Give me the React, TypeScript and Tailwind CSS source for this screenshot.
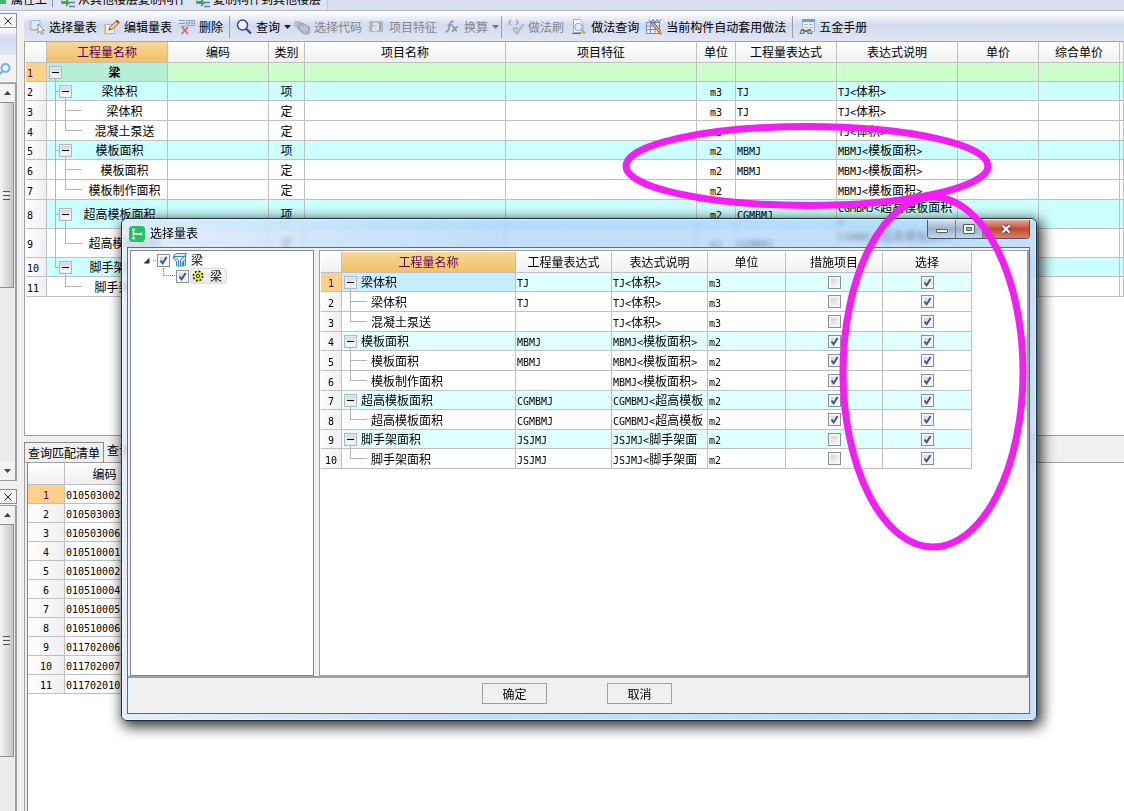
import { useState } from "react";
import type { ReactNode } from "react";
import clsx from "clsx";

type TreeShape = {
  depth: number;
  expandable?: boolean;
  last?: boolean;
  parentLast?: boolean;
};

type MainRow = TreeShape & {
  name: string;
  kind: string;
  unit: string;
  expression: string;
  note: string;
  height: number;
};

type DialogRow = TreeShape & {
  name: string;
  expression: string;
  note: string;
  unit: string;
  measure: boolean;
  height: number;
};

const mainColumns = [
  { label: "编码", width: "w-[101px]" },
  { label: "类别", width: "w-[36px]" },
  { label: "项目名称", width: "w-[201px]" },
  { label: "项目特征", width: "w-[191px]" },
  { label: "单位", width: "w-[39px]" },
  { label: "工程量表达式", width: "w-[101px]" },
  { label: "表达式说明", width: "w-[121px]" },
  { label: "单价", width: "w-[81px]" },
  { label: "综合单价", width: "w-[81px]" },
];

const mainRows: MainRow[] = [
  { name: "梁", depth: 0, expandable: true, kind: "", unit: "", expression: "", note: "", height: 19 },
  { name: "梁体积", depth: 1, expandable: true, kind: "项", unit: "m3", expression: "TJ", note: "TJ<体积>", height: 19 },
  { name: "梁体积", depth: 2, kind: "定", unit: "m3", expression: "TJ", note: "TJ<体积>", height: 20 },
  { name: "混凝土泵送", depth: 2, last: true, kind: "定", unit: "m3", expression: "", note: "TJ<体积>", height: 20 },
  { name: "模板面积", depth: 1, expandable: true, kind: "项", unit: "m2", expression: "MBMJ", note: "MBMJ<模板面积>", height: 19 },
  { name: "模板面积", depth: 2, kind: "定", unit: "m2", expression: "MBMJ", note: "MBMJ<模板面积>", height: 20 },
  { name: "模板制作面积", depth: 2, last: true, kind: "定", unit: "m2", expression: "", note: "MBMJ<模板面积>", height: 20 },
  { name: "超高模板面积", depth: 1, expandable: true, kind: "项", unit: "m2", expression: "CGMBMJ", note: "CGMBMJ<超高模板面积>", height: 29 },
  { name: "超高模板面积", depth: 2, last: true, kind: "定", unit: "m2", expression: "CGMBMJ", note: "CGMBMJ<超高模板面积>", height: 29 },
  { name: "脚手架面积", depth: 1, expandable: true, last: true, kind: "项", unit: "m2", expression: "JSJMJ", note: "JSJMJ<脚手架面积>", height: 19 },
  { name: "脚手架面积", depth: 2, last: true, parentLast: true, kind: "定", unit: "m2", expression: "JSJMJ", note: "JSJMJ<脚手架面积>", height: 20 },
];

const dialogColumns = [
  { label: "工程量表达式", width: "w-[96px]" },
  { label: "表达式说明", width: "w-[96px]" },
  { label: "单位", width: "w-[78px]" },
  { label: "措施项目", width: "w-[97px]" },
  { label: "选择", width: "w-[89px]" },
];

const dialogRows: DialogRow[] = [
  { name: "梁体积", depth: 0, expandable: true, expression: "TJ", note: "TJ<体积>", unit: "m3", measure: false, height: 19 },
  { name: "梁体积", depth: 1, expression: "TJ", note: "TJ<体积>", unit: "m3", measure: false, height: 20 },
  { name: "混凝土泵送", depth: 1, last: true, expression: "", note: "TJ<体积>", unit: "m3", measure: false, height: 20 },
  { name: "模板面积", depth: 0, expandable: true, expression: "MBMJ", note: "MBMJ<模板面积>", unit: "m2", measure: true, height: 19 },
  { name: "模板面积", depth: 1, expression: "MBMJ", note: "MBMJ<模板面积>", unit: "m2", measure: true, height: 20 },
  { name: "模板制作面积", depth: 1, last: true, expression: "", note: "MBMJ<模板面积>", unit: "m2", measure: true, height: 20 },
  { name: "超高模板面积", depth: 0, expandable: true, expression: "CGMBMJ", note: "CGMBMJ<超高模板面积>", unit: "m2", measure: true, height: 19 },
  { name: "超高模板面积", depth: 1, last: true, expression: "CGMBMJ", note: "CGMBMJ<超高模板面积>", unit: "m2", measure: true, height: 20 },
  { name: "脚手架面积", depth: 0, expandable: true, expression: "JSJMJ", note: "JSJMJ<脚手架面积>", unit: "m2", measure: false, height: 19 },
  { name: "脚手架面积", depth: 1, last: true, expression: "JSJMJ", note: "JSJMJ<脚手架面积>", unit: "m2", measure: false, height: 20 },
];

const listCodes = [
  "010503002",
  "010503003",
  "010503006",
  "010510001",
  "010510002",
  "010510004",
  "010510005",
  "010510006",
  "011702006",
  "011702007",
  "011702010",
];

const headCell =
  "border-r border-b border-[#c0c0c0] bg-linear-to-b from-white to-[#f0f0f0] p-0 font-normal";
const activeHeadCell =
  "border-r border-b border-[#c0c0c0] bg-linear-to-b from-[#f9d798] to-[#f2c063] p-0 font-normal text-[#5b0059]";
const numberCell =
  "border-r border-b border-[#c0c0c0] bg-linear-to-r from-white to-[#efefef] p-0 font-normal";
const activeNumberCell =
  "border-r border-b border-[#c0c0c0] bg-[#ffd08a] p-0 font-normal text-[#5b0059]";
const bodyCell = "border-r border-b border-[#c0c0c0] p-0";

// Latin letters and digits take half the width of a Chinese character
function Mixed({ text }: { text: string }) {
  return (
    <>
      {text.split(/([\x20-\x7e]+)/).map((part, index) =>
        index % 2 === 1 ? (
          <span
            key={index}
            className="font-['DejaVu_Sans_Mono',monospace] text-[10px] leading-none"
          >
            {part}
          </span>
        ) : (
          part
        ),
      )}
    </>
  );
}

function TreeGutter({
  row,
  base,
}: {
  row: TreeShape & { height: number };
  base: number;
}) {
  const middle = Math.floor((row.height - 1) / 2);
  const line = "absolute bg-[#b4b4b4]";
  const stem = 8 + (row.depth - 1) * 10;

  return (
    <span
      className="relative shrink-0 self-stretch"
      style={{ width: base + row.depth * 10 }}
    >
      {row.depth === 2 && !row.parentLast ? (
        <span className="absolute top-0 -bottom-px left-2 w-px bg-[#b4b4b4]" />
      ) : null}
      {row.depth > 0 ? (
        <>
          <span
            className={clsx(line, "top-0 w-px")}
            style={{ left: stem, height: row.last ? middle : row.height }}
          />
          <span
            className={clsx(line, "h-px", row.expandable ? "w-1" : "w-[17px]")}
            style={{ left: stem, top: middle }}
          />
        </>
      ) : null}
      {row.expandable ? (
        <>
          <span
            className={clsx(line, "-bottom-px w-px")}
            style={{ left: stem + 10, top: middle + 6 }}
          />
          <button
            type="button"
            aria-label="折叠"
            className="absolute flex size-[13px] items-center justify-center border border-[#b8b8b8] bg-linear-to-b from-[#cdd5e0] to-white shadow-[inset_0_0_0_1px_#e9e9e9]"
            style={{ left: 2 + row.depth * 10, top: middle - 6 }}
          >
            <span className="h-px w-[7px] bg-black" />
          </button>
        </>
      ) : null}
    </span>
  );
}

function TickBox({
  label,
  initial,
}: {
  label: string;
  initial: boolean;
}) {
  const [checked, setChecked] = useState(initial);

  return (
    <label className="relative block size-[13px] shrink-0">
      <input
        type="checkbox"
        aria-label={label}
        checked={checked}
        onChange={(event) => setChecked(event.target.checked)}
        className="block size-[13px] appearance-none border border-[#8e8f8f] bg-linear-to-br from-[#c8ccd4] to-white shadow-[inset_0_0_0_2px_#f4f4f4]"
      />
      {checked ? (
        <svg
          viewBox="0 0 13 13"
          className="pointer-events-none absolute inset-0 size-[13px]"
        >
          <path d="M3.5 6.500 5.600 9.400 9.600 3" fill="none" stroke="#3c5290" strokeWidth="1.900" />
        </svg>
      ) : null}
    </label>
  );
}

function Icon({ children }: { children: ReactNode }) {
  return (
    <svg viewBox="0 0 16 16" className="size-4 shrink-0" fill="none">
      {children}
    </svg>
  );
}

const icons = {
  pick: (
    <Icon>
      <path d="M2 1.5h9v9H2z" fill="#dcebfa" stroke="#9fb6da" />
      <path d="M.5 1v10M1 11.5h7" stroke="#f2b98c" />
      <path d="M9 5v9l2-2 1.6 3.4 1.6-.8L12.700 11.500H15.500z" fill="#fff" stroke="#7f8da8" />
    </Icon>
  ),
  edit: (
    <Icon>
      <path d="M1.500 5.500h9v9h-9z" fill="#e3effb" stroke="#9fb6da" />
      <path d="M.5 5v10h8" stroke="#f2b98c" />
      <path d="m5 11 1-3 7-7 2.500 2.500-7 6.500z" fill="#f5cf7c" stroke="#9a6f3c" />
      <path d="m11.500 2.500 1.500-1.700 2.500 2.400L14 4.800z" fill="#b0524a" />
      <path d="m5 11 .6-1.800L7 10.500z" fill="#333" />
    </Icon>
  ),
  remove: (
    <Icon>
      <path d="M0 1.500h6M0 4.500h6M2 7.500h4" stroke="#8a93a5" />
      <path d="M7.500 1.500h8v5h-8zM7.500 4h8M10 1.500v5M13 1.500v5" fill="#eef3fa" stroke="#8fa0bd" />
      <path d="m3 8 6 7M9 8l-6.500 7" stroke="#ea5f5c" strokeWidth="1.700" />
    </Icon>
  ),
  search: (
    <Icon>
      <circle cx="6.500" cy="6" r="5" fill="#f3f7ff" stroke="#3d3f9c" strokeWidth="1.500" />
      <path d="m10 9.500 5 5" stroke="#3d3f9c" strokeWidth="2.200" />
    </Icon>
  ),
  code: (
    <Icon>
      <path d="M0 2h6l3 3v5H4L0 7z" fill="#b9bec8" />
      <path d="m5 6 3-2 7.500 4v6l-4 1.500L7 13l-3-4z" fill="#b0b5bf" stroke="#9aa0ac" />
      <path d="m7 8 4 4M9.500 7l4 4" stroke="#dfe2e8" />
    </Icon>
  ),
  feature: (
    <Icon>
      <path d="M0 2h14v11H0z" fill="#b4b8c2" />
      <path d="M4 5.500c3-1.500 5-.5 5 1.500v4M9 8c-3-.5-5 .2-5 1.700 0 1.800 3.500 1.800 5-.3" stroke="#eceef3" strokeWidth="1.800" />
      <path d="M11 4v7" stroke="#8c92a0" />
    </Icon>
  ),
  fx: (
    <Icon>
      <path d="M9.500 2.500C7 1.500 6.300 4 5.500 7c-1 4-1.500 6.500-4 5.500M3.500 6H8.500M8 7.500c2.500-.5 2 4.500 5 4.500M13.500 7.500 8 12.500" stroke="#8f95a3" strokeWidth="1.700" />
    </Icon>
  ),
  brush: (
    <Icon>
      <path d="M3 1 .8 3.500 3 6M8 1l2.200 2.500L8 6" stroke="#9aa0ad" strokeWidth="1.200" />
      <path d="m15.500 5-5 5-2-1.500-3.500 1c.5 3 2.500 5.500 5 5.500l2-4 3.500-5z" fill="#c3c7d0" stroke="#a5aab6" />
    </Icon>
  ),
  docSearch: (
    <Icon>
      <path d="M2.500.5h6l3.500 3.500v9.500H2.500z" fill="#fff" stroke="#a0a9b8" />
      <circle cx="7.500" cy="8" r="3.800" fill="#d7ecf7" stroke="#8aa5bd" />
      <path d="m10.500 11 3.500 3.500" stroke="#e0a54a" strokeWidth="2.400" />
      <path d="M1 14.500h9" stroke="#666" />
    </Icon>
  ),
  auto: (
    <Icon>
      <path d="M.5 3.500h13v11H.5zM.5 7h13M.5 10.500h13M4.500 3.500v11M9 3.500v11" fill="#eef2fd" stroke="#7b87c4" />
      <path d="m3 .5 2 3 2-3 2 3 2-3 2 3 2-3" stroke="#5b74c4" />
      <path d="m5.500 4.500 2-1 7 8.500-1.700 1.300z" fill="#f4d079" stroke="#6b5a3a" />
      <path d="m12.500 12.500 3 3" stroke="#d77a3d" strokeWidth="2" />
    </Icon>
  ),
  manual: (
    <Icon>
      <path d="M3.500.5h12v12h-12z" fill="#eaf1fb" stroke="#9db5db" />
      <path d="M3 0h13v3H3z" fill="#6f9ae6" />
      <path d="M5 5.500h4M10 5.500h4M5 8.500h4M10 8.500h4" stroke="#a3b8d9" />
      <path d="M2 10h3l1 1h2l1-1h3l1.500 5H9l-1-2H6l-1 2H.5z" fill="#6f747c" />
      <circle cx="3.300" cy="13" r="1.300" fill="#c8ccd2" />
      <circle cx="10.700" cy="13" r="1.300" fill="#c8ccd2" />
    </Icon>
  ),
  copyLayer: (
    <Icon>
      <path d="M2 1v5h4V3l4 5-4 4V9H1z" fill="#4ca64c" />
      <path d="M9 3.500h6M9 7.500h6M9 11.500h6" stroke="#5a7cc0" strokeWidth="1.500" />
    </Icon>
  ),
};

function ToolButton({
  icon,
  label,
  disabled,
  dropdown,
}: {
  icon: ReactNode;
  label: string;
  disabled?: boolean;
  dropdown?: boolean;
}) {
  return (
    <button
      type="button"
      disabled={disabled}
      className={clsx(
        "flex shrink-0 items-center gap-1 whitespace-nowrap",
        disabled ? "text-[#85858c]" : "text-black",
        dropdown && "-mr-1",
      )}
    >
      {icon}
      {label}
      {dropdown ? (
        <svg viewBox="0 0 7 4" className="h-1 w-[7px]">
          <path d="M0 0h7L3.500 4z" fill={disabled ? "#777" : "#222"} />
        </svg>
      ) : null}
    </button>
  );
}

function ToolSeparator() {
  return <span className="-mx-px h-[22px] w-px shrink-0 bg-[#9ba0ad]" />;
}

function Toolbar() {
  return (
    <div className="flex h-[30px] shrink-0 items-center gap-[7px] overflow-hidden border-b border-[#a5a5a5] bg-linear-to-b from-white from-0% via-[#d3daee] via-45% to-[#e1e6f5] pl-[5px]">
      <ToolButton icon={icons.pick} label="选择量表" />
      <ToolButton icon={icons.edit} label="编辑量表" />
      <ToolButton icon={icons.remove} label="删除" />
      <ToolSeparator />
      <ToolButton icon={icons.search} label="查询" dropdown />
      <ToolButton icon={icons.code} label="选择代码" disabled />
      <ToolButton icon={icons.feature} label="项目特征" disabled />
      <ToolButton icon={icons.fx} label="换算" disabled dropdown />
      <ToolSeparator />
      <ToolButton icon={icons.brush} label="做法刷" disabled />
      <ToolButton icon={icons.docSearch} label="做法查询" />
      <ToolButton icon={icons.auto} label="当前构件自动套用做法" />
      <ToolSeparator />
      <ToolButton icon={icons.manual} label="五金手册" />
    </div>
  );
}

function TopStrip() {
  return (
    <div className="flex h-[11px] shrink-0 items-end overflow-hidden border-b border-[#b4bad0] bg-[#d9deee]">
      <div className="flex h-[10px] w-[328px] shrink-0 items-end border-r border-[#c3c8da] bg-[#dfe4f2] whitespace-nowrap">
        <span className="mr-[5px] mb-[6px] h-3 w-[6px] bg-[#49b36b]" />
        <span className="mb-1 w-9 leading-[14px]">属性上</span>
        <span className="mx-[5px] h-[7px] w-px self-start bg-[#8f94a3]" />
        <span className="ml-[2px] -mb-px">{icons.copyLayer}</span>
        <span className="mb-1 ml-[2px] leading-[14px]">从其他楼层复制构件</span>
        <span className="ml-[9px] -mb-px">{icons.copyLayer}</span>
        <span className="mb-1 ml-[2px] leading-[14px]">复制构件到其他楼层</span>
      </div>
    </div>
  );
}

function Arrow({ down }: { down?: boolean }) {
  return (
    <svg viewBox="0 0 7 4" className={clsx("h-1 w-[7px]", down && "rotate-180")}>
      <path d="M0 4h7L3.500 0z" fill="#444" />
    </svg>
  );
}

function ScrollBar({ thumb, downArrow }: { thumb: string; downArrow?: boolean }) {
  return (
    <div className="flex flex-1 flex-col border-t border-r-2 border-[#9f9f9f] bg-[#ececec] pr-px">
      <div className="flex h-[18px] shrink-0 items-center justify-center bg-[#f3f3f3]">
        <Arrow />
      </div>
      <div
        className={clsx(
          "flex flex-col items-center justify-center gap-px border border-l-0 border-[#8f8f8f] bg-linear-to-r from-[#f4f4f4] to-[#c6c6c8]",
          thumb,
        )}
      >
        <span className="h-px w-[7px] bg-[#555]" />
        <span className="h-px w-[7px] bg-white" />
        <span className="h-px w-[7px] bg-[#555]" />
        <span className="h-px w-[7px] bg-white" />
        <span className="h-px w-[7px] bg-[#555]" />
      </div>
      {downArrow ? (
        <div className="mt-auto flex h-[18px] items-center justify-center bg-[#f3f3f3]">
          <Arrow down />
        </div>
      ) : null}
    </div>
  );
}

function PanelClose() {
  return (
    <button
      type="button"
      aria-label="关闭面板"
      className="flex h-[15px] shrink-0 items-center justify-center border border-l-0 border-[#8f8f8f] bg-[#f5f5f5]"
    >
      <svg viewBox="0 0 8 8" className="size-2">
        <path d="m.5.5 7 7m0-7-7 7" stroke="#222" />
      </svg>
    </button>
  );
}

function LeftEdge() {
  return (
    <aside className="flex w-6 shrink-0 flex-col bg-[#f0f0f0] pr-[7px]">
      <div className="flex h-[469px] flex-col border-b border-[#9f9f9f] pt-px">
        <PanelClose />
        <div className="h-[27px] shrink-0 border-r border-[#b5b5b5] bg-linear-to-b from-white via-[#d3daee] via-40% to-[#e1e6f5]" />
        <div className="flex h-7 shrink-0 items-center border-r border-b border-[#b5b5b5] bg-[#f3f3f3]">
          <svg viewBox="0 0 12 12" className="size-3" fill="none">
            <circle cx="5.500" cy="5" r="4" stroke="#6ab2ea" strokeWidth="2" />
            <path d="M2.500 8 0 11" stroke="#6ab2ea" strokeWidth="2" />
          </svg>
        </div>
        <ScrollBar thumb="h-[186px]" downArrow />
      </div>
      <div className="flex flex-1 flex-col pt-2">
        <PanelClose />
        <div className="h-px shrink-0" />
        <ScrollBar thumb="h-[233px]" />
      </div>
    </aside>
  );
}

function QuantityTable() {
  return (
    <table className="w-full table-fixed border-separate border-spacing-0">
      <thead>
        <tr className="h-[21px]">
          <th className={clsx(headCell, "w-[21px]")} />
          <th className={clsx(activeHeadCell, "w-[121px]")}>工程量名称</th>
          {mainColumns.map((column) => (
            <th key={column.label} className={clsx(headCell, column.width)}>
              {column.label}
            </th>
          ))}
          <th className={headCell} />
        </tr>
      </thead>
      <tbody>
        {mainRows.map((row, index) => (
          <tr
            key={index}
            className={
              row.depth === 0
                ? "bg-[#ccffcc]"
                : row.depth === 1
                  ? "bg-[#ccffff]"
                  : "bg-white"
            }
            style={{ height: row.height }}
          >
            <th
              className={clsx(
                index === 0 ? activeNumberCell : numberCell,
                "pl-px text-left",
                index === 0 && "font-bold",
              )}
            >
              <Mixed text={String(index + 1)} />
            </th>
            <td className={clsx(bodyCell, index === 0 && "bg-[#b4f0d6]")}>
              <div className="flex items-center" style={{ height: row.height - 1 }}>
                <TreeGutter row={row} base={15} />
                <span
                  className={clsx(
                    "flex-1 text-center whitespace-nowrap",
                    index === 0 && "font-bold",
                  )}
                >
                  {row.name}
                </span>
              </div>
            </td>
            <td className={bodyCell} />
            <td className={clsx(bodyCell, "text-center")}>{row.kind}</td>
            <td className={bodyCell} />
            <td className={bodyCell} />
            <td className={clsx(bodyCell, "text-center")}>
              <Mixed text={row.unit} />
            </td>
            <td className={clsx(bodyCell, "pl-px")}>
              <Mixed text={row.expression} />
            </td>
            <td className={clsx(bodyCell, "pl-px break-all")}>
              <Mixed text={row.note} />
            </td>
            <td className={bodyCell} />
            <td className={bodyCell} />
            <td className={bodyCell} />
          </tr>
        ))}
      </tbody>
    </table>
  );
}

function MatchList() {
  return (
    <section className="flex flex-1 flex-col bg-[#f0f0f0]">
      <div className="flex h-[27px] shrink-0 items-end border-b border-[#a0a0a0]">
        <button
          type="button"
          className="h-5 border border-b-0 border-[#8a8a8a] bg-[#f0f0f0] px-[3px] whitespace-nowrap"
        >
          查询匹配清单
        </button>
        <button type="button" className="h-6 px-[3px] whitespace-nowrap">
          查询匹配定额
        </button>
      </div>
      <div className="flex-1 border-l border-[#a0a0a0] pl-[2px]">
        <div className="h-full border-l border-[#808080] bg-white">
          <table className="w-[117px] table-fixed border-separate border-spacing-0">
            <thead>
              <tr className="h-[22px]">
                <th className={clsx(headCell, "w-[37px]")} />
                <th className={headCell}>编码</th>
              </tr>
            </thead>
            <tbody>
              {listCodes.map((code, index) => (
                <tr key={code} className="h-[19px]">
                  <th className={index === 0 ? activeNumberCell : numberCell}>
                    <Mixed text={String(index + 1)} />
                  </th>
                  <td className={clsx(bodyCell, "pl-px")}>
                    <Mixed text={code} />
                  </td>
                </tr>
              ))}
            </tbody>
          </table>
        </div>
      </div>
    </section>
  );
}

function ComponentTree() {
  return (
    <div className="w-[184px] shrink-0 border border-[#828790] bg-white pt-px pl-3">
      <div className="flex h-4 items-center">
        <svg viewBox="0 0 7 7" className="size-[7px]">
          <path d="M6.500.5v6h-6z" fill="#333" />
        </svg>
        <span className="mr-px ml-[3px] w-[3px] border-t border-dotted border-[#808080]" />
        <TickBox label="梁类别" initial />
        <svg viewBox="0 0 16 16" className="ml-[2px] size-4" fill="#d9ecfb" stroke="#2f86d6">
          <path d="m1.500 3.500 3-2h10l-2 3h-11z" />
          <path d="m1.500 4.500 5 4v6l-2-1V9.500l-3-3zM12.500 4.500 8.500 8v6.500l2-1V10l3-2.500M13.500 3v10l-2 1.500V9" />
        </svg>
        <span className="ml-[3px]">梁</span>
      </div>
      <div className="flex h-4 items-center pl-5">
        <span className="mr-px h-2 w-3 self-start border-b border-l border-dotted border-[#808080]" />
        <TickBox label="梁" initial />
        <span className="ml-px flex h-4 w-[37px] items-center gap-[6px] rounded-[3px] border border-[#dcdcdc] bg-linear-to-b from-[#fafafa] to-[#e8e8e8] pl-px">
          <svg viewBox="0 0 12 12" className="size-3">
            <circle cx="6" cy="6" r="4.500" fill="#f7f000" stroke="#222" strokeWidth="2" strokeDasharray="2 1.500" />
            <circle cx="6" cy="6" r="3.800" fill="#f7f000" />
            <circle cx="6" cy="6" r="1.700" fill="none" stroke="#222" />
          </svg>
          梁
        </span>
      </div>
    </div>
  );
}

function DialogTable() {
  return (
    <table className="w-[651px] table-fixed border-separate border-spacing-0">
      <thead>
        <tr className="h-[21px]">
          <th className={clsx(headCell, "w-[21px]")} />
          <th className={activeHeadCell}>工程量名称</th>
          {dialogColumns.map((column) => (
            <th key={column.label} className={clsx(headCell, column.width)}>
              {column.label}
            </th>
          ))}
        </tr>
      </thead>
      <tbody>
        {dialogRows.map((row, index) => (
          <tr
            key={index}
            className={row.depth === 0 ? "bg-[#e0ffff]" : "bg-white"}
            style={{ height: row.height }}
          >
            <th className={index === 0 ? activeNumberCell : numberCell}>
              <Mixed text={String(index + 1)} />
            </th>
            <td className={clsx(bodyCell, index === 0 && "bg-[#c6eeff]")}>
              <div className="flex items-center" style={{ height: row.height - 1 }}>
                <TreeGutter row={row} base={19} />
                {row.name}
              </div>
            </td>
            <td className={clsx(bodyCell, "pl-px")}>
              <Mixed text={row.expression} />
            </td>
            <td className={clsx(bodyCell, "pl-px")}>
              <div className="h-[14px] overflow-hidden break-all">
                <Mixed text={row.note} />
              </div>
            </td>
            <td className={clsx(bodyCell, "pl-px")}>
              <Mixed text={row.unit} />
            </td>
            <td className={bodyCell}>
              <div className="flex justify-center">
                <TickBox label={`${row.name} 措施项目`} initial={row.measure} />
              </div>
            </td>
            <td className={bodyCell}>
              <div className="flex justify-center">
                <TickBox label={`${row.name} 选择`} initial />
              </div>
            </td>
          </tr>
        ))}
      </tbody>
    </table>
  );
}

function CaptionButtons() {
  return (
    <div className="flex h-[19px] self-start overflow-hidden rounded-b-[4px] border border-t-0 border-[#47586b]">
      <button
        type="button"
        aria-label="最小化"
        className="flex w-7 items-center justify-center border-r border-[#6f8398] bg-linear-to-b from-[#d3e1ef] via-[#9db3c9] via-50% to-[#c2d7ea]"
      >
        <span className="mt-1 h-1 w-3 rounded-[1px] border border-[#535f6e] bg-white" />
      </button>
      <button
        type="button"
        aria-label="最大化"
        className="flex w-[27px] items-center justify-center border-r border-[#6f8398] bg-linear-to-b from-[#d3e1ef] via-[#9db3c9] via-50% to-[#c2d7ea]"
      >
        <svg viewBox="0 0 12 10" className="h-[10px] w-3">
          <path d="M.5.5h11v9H.5z" fill="#fff" stroke="#535f6e" />
          <path d="M3.500 3.500h5v3h-5z" fill="#9db3c9" stroke="#535f6e" />
        </svg>
      </button>
      <button
        type="button"
        aria-label="关闭"
        className="flex w-[46px] items-center justify-center bg-linear-to-b from-[#e3a698] via-[#c4452b] via-50% to-[#d98264]"
      >
        <svg viewBox="0 0 12 10" className="h-[10px] w-3">
          <path d="m2.500 1.500 7 7m0-7-7 7" stroke="#50424a" strokeWidth="4" />
          <path d="m2.500 1.500 7 7m0-7-7 7" stroke="#fff" strokeWidth="2.200" />
        </svg>
      </button>
    </div>
  );
}

function PickDialog() {
  return (
    <section
      role="dialog"
      aria-labelledby="pick-dialog-title"
      className="absolute top-[218px] right-[87px] left-[121px] rounded-[6px] border border-[#1d2c3a] bg-linear-to-r from-[#dcebfa]/85 from-0% via-[#a3cdf9]/65 via-40% to-[#a9d1fa]/70 shadow-[3px_4px_14px_2px_rgba(0,0,0,0.8)] backdrop-blur-[2px]"
    >
      <div className="rounded-[5px] border border-white/70 px-1 pr-[5px] pb-[5px]">
        <header className="flex h-[27px] items-center">
          <svg viewBox="0 0 16 16" className="ml-[2px] size-4 rounded-[3px]">
            <rect width="16" height="16" rx="3" fill="#2abf62" />
            <path d="M3 3.500h3M4.500 3.500v9M3 12.500h3M4.500 8H13M12.500 6.500v3" fill="none" stroke="#fff" strokeWidth="1.400" />
          </svg>
          <h1 id="pick-dialog-title" className="ml-[5px] flex-1 pb-[2px]">
            选择量表
          </h1>
          <CaptionButtons />
        </header>
        <div className="border border-[#5d6b7c] bg-[#f0f0f0]">
          <div className="flex min-h-[428px] gap-[5px] pt-[2px] pl-[2px]">
            <ComponentTree />
            <div className="flex-1 border border-r-2 border-[#a0a0a0] bg-white pt-px pl-px">
              <DialogTable />
            </div>
          </div>
          <footer className="flex justify-center gap-[60px] border-t-2 border-[#a0a0a0] pt-[5px] pr-[3px] pb-[9px]">
            <button type="button" className="h-[21px] w-[65px] border border-[#a0a0a0]">
              确定
            </button>
            <button type="button" className="h-[21px] w-[65px] border border-[#a0a0a0]">
              取消
            </button>
          </footer>
        </div>
      </div>
    </section>
  );
}

function Markup() {
  return (
    <svg
      className="pointer-events-none absolute top-0 left-0 h-[811px] w-[1124px]"
      viewBox="0 0 1124 811"
      fill="none"
      stroke="#f41df4"
      strokeWidth="7"
    >
      <ellipse cx="807" cy="166" rx="181" ry="39.500" />
      <ellipse cx="933" cy="372" rx="90" ry="175" />
    </svg>
  );
}

export default function App() {
  return (
    <div className="relative flex min-h-screen flex-col overflow-hidden bg-white font-['Noto_Sans_CJK_SC',sans-serif] text-[12px] leading-[14px] text-black">
      <TopStrip />
      <div className="flex flex-1 pt-px">
        <LeftEdge />
        <main className="flex min-w-0 flex-1 flex-col">
          <Toolbar />
          <div className="h-[394px] shrink-0 overflow-hidden border-b border-l border-[#a0a0a0] pl-px">
            <QuantityTable />
          </div>
          <MatchList />
        </main>
      </div>
      <PickDialog />
      <Markup />
    </div>
  );
}
